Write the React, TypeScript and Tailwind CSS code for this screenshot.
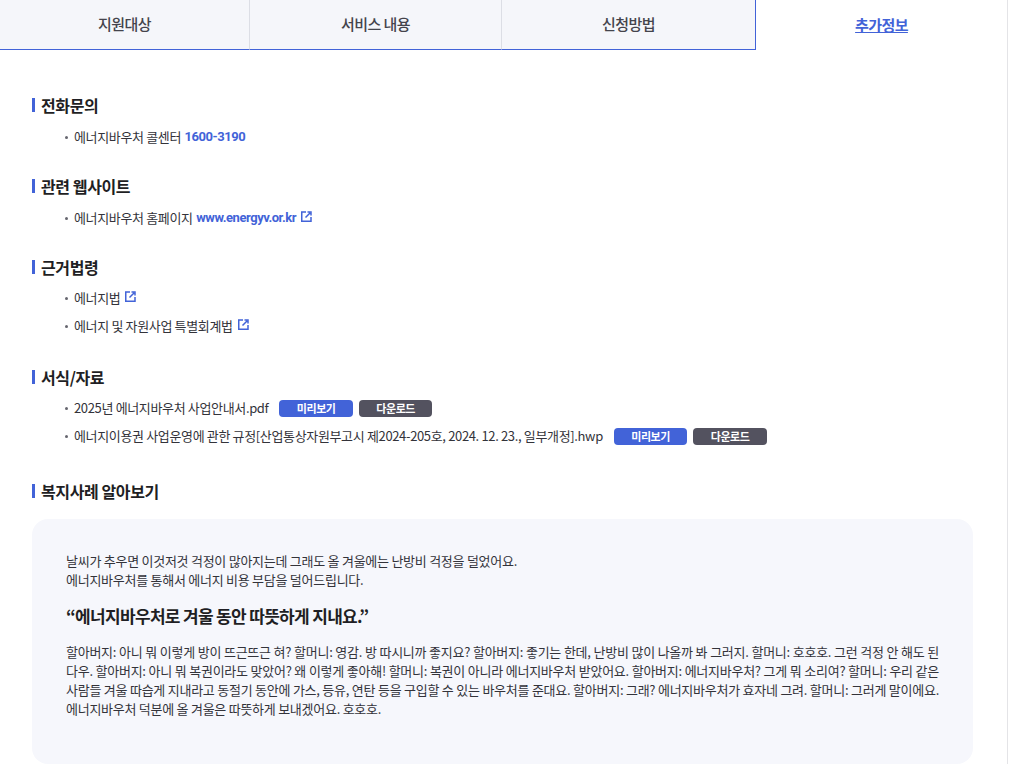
import React from 'react';

const font = "font-['Noto_Sans_CJK_KR','Noto_Sans',sans-serif]";

const LinkIcon = () => (
    <svg width="11" height="11" viewBox="0 0 11 11" fill="none" stroke="#4263d8" className="ml-[5px] mb-[3px] inline-block">
        <path d="M5 1H0.75V10.25H10V6" strokeWidth="1.5" />
        <path d="M4.5 6.5L9 2M6.5 1H10V4.5" strokeWidth="1.5" />
    </svg>
);

const Heading = ({ children }: { children: React.ReactNode }) => (
    <h3 className="relative flex items-center h-6 pl-[9px] text-[16px] font-bold tracking-[-0.025em] text-[#1f1f24]">
        <span className="absolute left-0 top-[5px] w-[3px] h-[14px] bg-[#4263d8]" />
        {children}
    </h3>
);

const Item = ({ children }: { children: React.ReactNode }) => (
    <li className="relative h-7 flex items-center pl-[42px] text-[13px] tracking-[-0.027em] text-[#33333a]">
        <span className="absolute left-[33px] top-[13px] w-[3px] h-[3px] rounded-full bg-[#66666f]" />
        {children}
    </li>
);

const FileButtons = () => (
    <span className="flex gap-[6px] ml-[11px]">
        <span className="flex items-center justify-center w-[73.5px] h-[17px] rounded-[4px] bg-[#4263d8] text-white text-[11px] font-bold tracking-[-0.04em]">미리보기</span>
        <span className="flex items-center justify-center w-[73.5px] h-[17px] rounded-[4px] bg-[#53525f] text-white text-[11px] font-bold tracking-[-0.04em]">다운로드</span>
    </span>
);

const tabs = [
    { label: '지원대상', width: 'w-[250px]' },
    { label: '서비스 내용', width: 'w-[252px]' },
    { label: '신청방법', width: 'w-[254px]' },
];

export default function App() {
    return (
        <div className={`${font} w-[1011px] h-[764px] overflow-hidden bg-white flex`}>
            <div className="w-[1007px] shrink-0">
                <div className="flex h-[50px]">
                    {tabs.map((tab, i) => (
                        <div
                            key={tab.label}
                            className={`${tab.width} flex items-center justify-center bg-[#f5f6fa] border-b border-b-[#4263d8] text-[15px] font-medium tracking-[-0.04em] text-[#44444c] ${i < 2 ? 'border-r border-r-[#dcdee5]' : 'border-r border-r-[#4263d8]'}`}
                        >
                            {tab.label}
                        </div>
                    ))}
                    <div className="flex-1 flex items-center justify-center text-[15px] font-bold tracking-[-0.04em] text-[#4263d8] underline">
                        추가정보
                    </div>
                </div>
                <div className="pl-8 pr-[34px] pt-[43px]">
                    <section>
                        <Heading>전화문의</Heading>
                        <ul className="mt-[6px]">
                            <Item>에너지바우처 콜센터&nbsp;<b className="ml-px font-['Roboto'] font-bold tracking-[-0.035em] text-[#4263d8]">1600-3190</b></Item>
                        </ul>
                    </section>
                    <section className="mt-[23px]">
                        <Heading>관련 웹사이트</Heading>
                        <ul className="mt-[6px]">
                            <Item>에너지바우처 홈페이지&nbsp;<b className="ml-px font-['Roboto'] font-bold tracking-[-0.035em] text-[#4263d8]">www.energyv.or.kr</b><LinkIcon /></Item>
                        </ul>
                    </section>
                    <section className="mt-[23px]">
                        <Heading>근거법령</Heading>
                        <ul className="mt-[5px]">
                            <Item>에너지법<LinkIcon /></Item>
                            <Item>에너지 및 자원사업 특별회계법<LinkIcon /></Item>
                        </ul>
                    </section>
                    <section className="mt-[25px]">
                        <Heading>서식/자료</Heading>
                        <ul className="mt-[5px]">
                            <Item>2025년 에너지바우처 사업안내서.pdf<FileButtons /></Item>
                            <Item>에너지이용권 사업운영에 관한 규정[산업통상자원부고시 제2024-205호, 2024. 12. 23., 일부개정].hwp<FileButtons /></Item>
                        </ul>
                    </section>
                    <section className="mt-[29px]">
                        <Heading>복지사례 알아보기</Heading>
                        <div className="mt-[16px] h-[245px] rounded-[16px] bg-[#f6f7fc] px-[34px] pt-[32px] text-[13px] tracking-[-0.02em] leading-[19px] text-[#33333a]">
                            <p>날씨가 추우면 이것저것 걱정이 많아지는데 그래도 올 겨울에는 난방비 걱정을 덜었어요.<br />에너지바우처를 통해서 에너지 비용 부담을 덜어드립니다.</p>
                            <p className="mt-[15px] text-[17px] leading-6 font-bold tracking-[-0.04em] text-[#1f1f24]">“에너지바우처로 겨울 동안 따뜻하게 지내요.”</p>
                            <p className="mt-[14px] text-justify">할아버지: 아니 뭐 이렇게 방이 뜨근뜨근 혀? 할머니: 영감. 방 따시니까 좋지요? 할아버지: 좋기는 한데, 난방비 많이 나올까 봐 그러지. 할머니: 호호호. 그런 걱정 안 해도 된다우. 할아버지: 아니 뭐 복권이라도 맞았어? 왜 이렇게 좋아해! 할머니: 복권이 아니라 에너지바우처 받았어요. 할아버지: 에너지바우처? 그게 뭐 소리여? 할머니: 우리 같은 사람들 겨울 따습게 지내라고 동절기 동안에 가스, 등유, 연탄 등을 구입할 수 있는 바우처를 준대요. 할아버지: 그래? 에너지바우처가 효자네 그려. 할머니: 그러게 말이에요. 에너지바우처 덕분에 올 겨울은 따뜻하게 보내겠어요. 호호호.</p>
                        </div>
                    </section>
                </div>
            </div>
            <div className="w-px h-full bg-[#e4e4e7]" />
        </div>
    );
}
